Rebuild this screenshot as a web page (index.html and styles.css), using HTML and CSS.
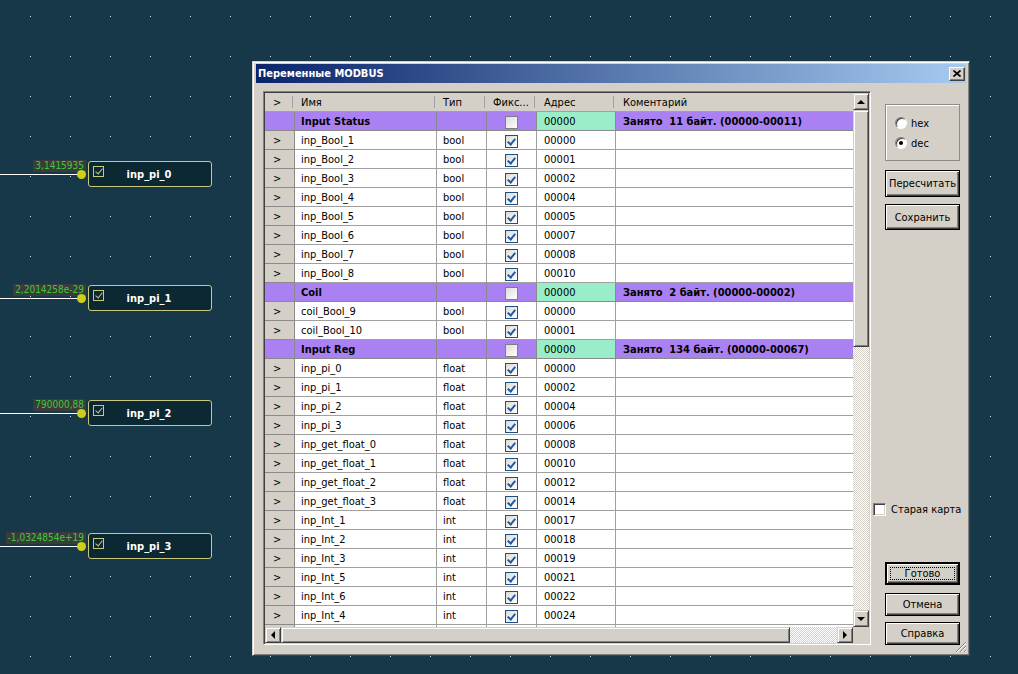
FILE: index.html
```html
<!DOCTYPE html>
<html>
<head>
<meta charset="utf-8">
<link rel="stylesheet" href="styles.css">
</head>
<body>
<div class="desktop">
  <div class="node n0"><div class="wire"><span class="val">3,1415935</span><span class="dot"></span></div><div class="blk"><i class="bck"></i><span class="bname">inp_pi_0</span></div></div>
  <div class="node n1"><div class="wire"><span class="val">2,2014258e-29</span><span class="dot"></span></div><div class="blk"><i class="bck"></i><span class="bname">inp_pi_1</span></div></div>
  <div class="node n2"><div class="wire"><span class="val">790000,88</span><span class="dot"></span></div><div class="blk"><i class="bck"></i><span class="bname">inp_pi_2</span></div></div>
  <div class="node n3"><div class="wire"><span class="val">-1,0324854e+19</span><span class="dot"></span></div><div class="blk"><i class="bck"></i><span class="bname">inp_pi_3</span></div></div>

  <div class="win">
    <div class="title">
      <span>Переменные MODBUS</span>
      <div class="xbtn"><svg width="8" height="7" viewBox="0 0 8 7"><path d="M0.5 0.5 L7.5 6.5 M7.5 0.5 L0.5 6.5" stroke="#000" stroke-width="1.7" fill="none"/></svg></div>
    </div>
    <div class="wbody">
      <div class="grid">
        <div class="gmain">
          <div class="table">
            <div class="row hdr"><div class="c rh">&gt;</div><div class="c">Имя</div><div class="c">Тип</div><div class="c">Фикс...</div><div class="c">Адрес</div><div class="c">Коментарий</div></div>

            <div class="row grp"><div class="c rh"></div><div class="c">Input Status</div><div class="c"></div><div class="c fx"><i class="cb"></i></div><div class="c ad">00000</div><div class="c">Занято&nbsp; 11 байт. (00000-00011)</div></div>
            <div class="row"><div class="c rh">&gt;</div><div class="c">inp_Bool_1</div><div class="c">bool</div><div class="c fx"><i class="cb on"></i></div><div class="c">00000</div><div class="c"></div></div>
            <div class="row"><div class="c rh">&gt;</div><div class="c">inp_Bool_2</div><div class="c">bool</div><div class="c fx"><i class="cb on"></i></div><div class="c">00001</div><div class="c"></div></div>
            <div class="row"><div class="c rh">&gt;</div><div class="c">inp_Bool_3</div><div class="c">bool</div><div class="c fx"><i class="cb on"></i></div><div class="c">00002</div><div class="c"></div></div>
            <div class="row"><div class="c rh">&gt;</div><div class="c">inp_Bool_4</div><div class="c">bool</div><div class="c fx"><i class="cb on"></i></div><div class="c">00004</div><div class="c"></div></div>
            <div class="row"><div class="c rh">&gt;</div><div class="c">inp_Bool_5</div><div class="c">bool</div><div class="c fx"><i class="cb on"></i></div><div class="c">00005</div><div class="c"></div></div>
            <div class="row"><div class="c rh">&gt;</div><div class="c">inp_Bool_6</div><div class="c">bool</div><div class="c fx"><i class="cb on"></i></div><div class="c">00007</div><div class="c"></div></div>
            <div class="row"><div class="c rh">&gt;</div><div class="c">inp_Bool_7</div><div class="c">bool</div><div class="c fx"><i class="cb on"></i></div><div class="c">00008</div><div class="c"></div></div>
            <div class="row"><div class="c rh">&gt;</div><div class="c">inp_Bool_8</div><div class="c">bool</div><div class="c fx"><i class="cb on"></i></div><div class="c">00010</div><div class="c"></div></div>

            <div class="row grp"><div class="c rh"></div><div class="c">Coil</div><div class="c"></div><div class="c fx"><i class="cb"></i></div><div class="c ad">00000</div><div class="c">Занято&nbsp; 2 байт. (00000-00002)</div></div>
            <div class="row"><div class="c rh">&gt;</div><div class="c">coil_Bool_9</div><div class="c">bool</div><div class="c fx"><i class="cb on"></i></div><div class="c">00000</div><div class="c"></div></div>
            <div class="row"><div class="c rh">&gt;</div><div class="c">coil_Bool_10</div><div class="c">bool</div><div class="c fx"><i class="cb on"></i></div><div class="c">00001</div><div class="c"></div></div>

            <div class="row grp"><div class="c rh"></div><div class="c">Input Reg</div><div class="c"></div><div class="c fx"><i class="cb"></i></div><div class="c ad">00000</div><div class="c">Занято&nbsp; 134 байт. (00000-00067)</div></div>
            <div class="row"><div class="c rh">&gt;</div><div class="c">inp_pi_0</div><div class="c">float</div><div class="c fx"><i class="cb on"></i></div><div class="c">00000</div><div class="c"></div></div>
            <div class="row"><div class="c rh">&gt;</div><div class="c">inp_pi_1</div><div class="c">float</div><div class="c fx"><i class="cb on"></i></div><div class="c">00002</div><div class="c"></div></div>
            <div class="row"><div class="c rh">&gt;</div><div class="c">inp_pi_2</div><div class="c">float</div><div class="c fx"><i class="cb on"></i></div><div class="c">00004</div><div class="c"></div></div>
            <div class="row"><div class="c rh">&gt;</div><div class="c">inp_pi_3</div><div class="c">float</div><div class="c fx"><i class="cb on"></i></div><div class="c">00006</div><div class="c"></div></div>
            <div class="row"><div class="c rh">&gt;</div><div class="c">inp_get_float_0</div><div class="c">float</div><div class="c fx"><i class="cb on"></i></div><div class="c">00008</div><div class="c"></div></div>
            <div class="row"><div class="c rh">&gt;</div><div class="c">inp_get_float_1</div><div class="c">float</div><div class="c fx"><i class="cb on"></i></div><div class="c">00010</div><div class="c"></div></div>
            <div class="row"><div class="c rh">&gt;</div><div class="c">inp_get_float_2</div><div class="c">float</div><div class="c fx"><i class="cb on"></i></div><div class="c">00012</div><div class="c"></div></div>
            <div class="row"><div class="c rh">&gt;</div><div class="c">inp_get_float_3</div><div class="c">float</div><div class="c fx"><i class="cb on"></i></div><div class="c">00014</div><div class="c"></div></div>
            <div class="row"><div class="c rh">&gt;</div><div class="c">inp_Int_1</div><div class="c">int</div><div class="c fx"><i class="cb on"></i></div><div class="c">00017</div><div class="c"></div></div>
            <div class="row"><div class="c rh">&gt;</div><div class="c">inp_Int_2</div><div class="c">int</div><div class="c fx"><i class="cb on"></i></div><div class="c">00018</div><div class="c"></div></div>
            <div class="row"><div class="c rh">&gt;</div><div class="c">inp_Int_3</div><div class="c">int</div><div class="c fx"><i class="cb on"></i></div><div class="c">00019</div><div class="c"></div></div>
            <div class="row"><div class="c rh">&gt;</div><div class="c">inp_Int_5</div><div class="c">int</div><div class="c fx"><i class="cb on"></i></div><div class="c">00021</div><div class="c"></div></div>
            <div class="row"><div class="c rh">&gt;</div><div class="c">inp_Int_6</div><div class="c">int</div><div class="c fx"><i class="cb on"></i></div><div class="c">00022</div><div class="c"></div></div>
            <div class="row"><div class="c rh">&gt;</div><div class="c">inp_Int_4</div><div class="c">int</div><div class="c fx"><i class="cb on"></i></div><div class="c">00024</div><div class="c"></div></div>
            <div class="row"><div class="c rh"></div><div class="c"></div><div class="c"></div><div class="c fx"></div><div class="c"></div><div class="c"></div></div>
          </div>
          <div class="vs">
            <div class="sb vbtn"><i class="ar up"></i></div>
            <div class="sb vthumb"></div>
            <div class="track"></div>
            <div class="sb vbtn"><i class="ar dn"></i></div>
          </div>
        </div>
        <div class="hs">
          <div class="sb hbtn"><i class="ar lf"></i></div>
          <div class="sb hthumb"></div>
          <div class="track"></div>
          <div class="sb hbtn"><i class="ar rt"></i></div>
          <div class="corner"></div>
        </div>
      </div>

      <div class="side">
        <div class="gbox">
          <label class="rad"><i class="rb"></i><span>hex</span></label>
          <label class="rad"><i class="rb sel"></i><span>dec</span></label>
        </div>
        <div class="btn b1">Пересчитать</div>
        <div class="btn b2">Сохранить</div>
        <label class="chk"><i class="cbx"></i><span>Старая карта</span></label>
        <div class="btn def"><span class="focus">Готово</span></div>
        <div class="btn b4">Отмена</div>
        <div class="btn b5">Справка</div>
      </div>
    </div>
    <svg class="grip" width="12" height="12" viewBox="0 0 12 12">
      <path d="M11 1 L1 11 M11 5 L5 11 M11 9 L9 11" stroke="#808080" stroke-width="1" fill="none"/>
      <path d="M11 2 L2 11 M11 6 L6 11 M11 10 L10 11" stroke="#fff" stroke-width="1" fill="none"/>
    </svg>
  </div>
</div>
</body>
</html>
```

FILE: styles.css
```css
* { box-sizing: border-box; }

html, body {
  margin: 0;
  padding: 0;
}

body {
  width: 1018px;
  height: 674px;
  overflow: hidden;
  background-color: #163848;
  background-image: radial-gradient(circle at 30.5px 16.5px, rgba(255,255,255,0.85) 0, rgba(255,255,255,0.85) 0.6px, rgba(255,255,255,0) 1px);
  background-size: 40px 40px;
  font-family: "DejaVu Sans Condensed", "DejaVu Sans", sans-serif;
  font-size: 11px;
  color: #000;
}

.desktop {
  position: relative;
  width: 1018px;
  height: 674px;
}

/* ---------- canvas nodes ---------- */
.node {
  position: absolute;
  left: 0;
  width: 212px;
  height: 26px;
  display: flex;
  align-items: center;
}
.n0 { top: 161px; }
.n1 { top: 285px; }
.n2 { top: 400px; }
.n3 { top: 533px; }

.wire {
  position: relative;
  width: 82px;
  height: 1px;
  background: #ffffff;
  flex: 0 0 82px;
}
.val {
  position: absolute;
  right: -4px;
  bottom: 3px;
  height: 12px;
  padding: 0 2px;
  background: #3a3c3c;
  color: #3ec83a;
  font-family: "DejaVu Sans Condensed", "DejaVu Sans", sans-serif;
  font-size: 10px;
  line-height: 12px;
  white-space: nowrap;
}
.dot {
  position: absolute;
  right: -4px;
  top: -4px;
  width: 9px;
  height: 9px;
  border-radius: 50%;
  background: #cfcf1a;
}
.blk {
  margin-left: 6px;
  width: 124px;
  height: 26px;
  border: 1px solid #c9c97e;
  border-radius: 3px;
  background: #0c2832;
  display: flex;
  align-items: center;
  padding: 0 17px 0 4px;
  color: #fff;
  font-weight: bold;
}
.bck {
  position: relative;
  width: 11px;
  height: 11px;
  margin-top: -5px;
  border: 1px solid #c9c97e;
  flex: 0 0 11px;
}
.bck::after {
  content: "";
  position: absolute;
  left: 3px;
  top: 0px;
  width: 3px;
  height: 6px;
  border-right: 1px solid #c9c97e;
  border-bottom: 1px solid #c9c97e;
  transform: rotate(40deg);
}
.bname {
  flex: 1;
  text-align: center;
}

/* ---------- window ---------- */
.win {
  position: absolute;
  left: 252px;
  top: 61px;
  width: 718px;
  height: 595px;
  background: #d4d0c8;
  border: 1px solid;
  border-color: #d4d0c8 #404040 #404040 #d4d0c8;
  box-shadow: inset 1px 1px #ffffff, inset -1px -1px #808080;
  padding: 2px 3px 3px 3px;
  display: flex;
  flex-direction: column;
}
.title {
  height: 19px;
  flex: 0 0 19px;
  display: flex;
  align-items: center;
  justify-content: space-between;
  padding: 0 1px 0 2px;
  background: linear-gradient(90deg, #0a246a 0%, #a6caf0 100%);
  color: #fff;
  font-weight: bold;
}
.xbtn {
  width: 16px;
  height: 14px;
  background: #d4d0c8;
  border: 1px solid;
  border-color: #fff #404040 #404040 #fff;
  box-shadow: inset -1px -1px #808080;
  display: flex;
  align-items: center;
  justify-content: center;
  padding-bottom: 1px;
}
.xbtn svg { display: block; }

.wbody {
  flex: 1;
  display: flex;
}

.grid {
  margin: 8px 0 0 7px;
  width: 608px;
  height: 554px;
  border: 1px solid;
  border-color: #808080 #ffffff #ffffff #808080;
  box-shadow: inset 1px 1px #404040, inset -1px -1px #d4d0c8;
  padding: 1px;
  display: flex;
  flex-direction: column;
  background: #d4d0c8;
}
.gmain {
  display: flex;
  height: 534px;
  flex: 0 0 534px;
}
.table {
  width: 588px;
  overflow: hidden;
  background: #fff;
}
.row {
  display: grid;
  grid-template-columns: 30px 142px 50px 50px 79px 237px;
  height: 19px;
  background: #fff;
}
.c {
  border-right: 1px solid #a0a0a0;
  border-bottom: 1px solid #a0a0a0;
  padding-left: 6px;
  line-height: 20px;
  white-space: nowrap;
  overflow: hidden;
}
.c:nth-child(5), .c:nth-child(6) { padding-left: 7px; }
.c:last-child { border-right: none; }
.rh {
  background: #d4d0c8;
  padding-left: 8px;
  border-color: #8a8a8a;
}
.fx {
  display: flex;
  align-items: center;
  justify-content: center;
  padding-left: 0;
  padding-top: 2px;
}

.hdr {
  background: #d4d0c8;
}
.hdr .c {
  position: relative;
  border-right: none;
  border-bottom: 1px solid #a0a0a0;
}
.hdr .c::after {
  content: "";
  position: absolute;
  right: -1px;
  top: 3px;
  bottom: 3px;
  width: 2px;
  border-left: 1px solid #a0a0a0;
  border-right: 1px solid #ffffff;
}
.hdr .c:last-child::after { display: none; }
.hdr .rh { padding-left: 8px; }

.grp, .grp .rh {
  background: #a981f2;
  font-weight: bold;
}
.grp .c { border-color: #8a8a8a; }
.grp .ad {
  background: #99eec9;
  font-weight: normal;
}
.grp .c:nth-child(4) { font-weight: normal; }

.cb {
  position: relative;
  width: 13px;
  height: 13px;
  border: 1px solid #7f7f7f;
  background: linear-gradient(135deg, #dcdcd6 0%, #ffffff 100%);
}
.cb.on {
  border-color: #1c5180;
}
.cb.on::after {
  content: "";
  position: absolute;
  left: 3px;
  top: 1px;
  width: 3px;
  height: 6px;
  border-right: 2px solid #2158a8;
  border-bottom: 2px solid #2158a8;
  transform: rotate(40deg);
}

/* ---------- scrollbars ---------- */
.sb {
  background: #d4d0c8;
  border: 1px solid;
  border-color: #d4d0c8 #404040 #404040 #d4d0c8;
  box-shadow: inset 1px 1px #ffffff, inset -1px -1px #808080;
  display: flex;
  align-items: center;
  justify-content: center;
}
.track {
  flex: 1;
  background: repeating-conic-gradient(#ffffff 0 25%, #d4d0c8 0 50%) 0 0 / 2px 2px;
}
.vs {
  width: 16px;
  display: flex;
  flex-direction: column;
}
.vbtn { height: 17px; flex: 0 0 17px; }
.vthumb { height: 237px; flex: 0 0 237px; }
.hs {
  height: 16px;
  flex: 0 0 16px;
  display: flex;
}
.hbtn { width: 16px; flex: 0 0 16px; }
.hthumb { width: 509px; flex: 0 0 509px; }
.corner { width: 16px; flex: 0 0 16px; background: #d4d0c8; }

.ar { width: 0; height: 0; display: block; }
.ar.up { border-left: 4px solid transparent; border-right: 4px solid transparent; border-bottom: 4px solid #000; }
.ar.dn { border-left: 4px solid transparent; border-right: 4px solid transparent; border-top: 4px solid #000; }
.ar.lf { border-top: 4px solid transparent; border-bottom: 4px solid transparent; border-right: 4px solid #000; }
.ar.rt { border-top: 4px solid transparent; border-bottom: 4px solid transparent; border-left: 4px solid #000; }

/* ---------- side panel ---------- */
.side {
  flex: 1;
  display: flex;
  flex-direction: column;
  padding-bottom: 7px;
}
.gbox {
  margin: 21px 0 0 14px;
  width: 75px;
  height: 57px;
  border: 1px solid #8c8c8c;
  box-shadow: inset 1px 1px #ffffff;
  padding: 8px 0 0 9px;
}
.rad {
  display: flex;
  align-items: center;
  height: 20px;
  gap: 4px;
}
.rb {
  position: relative;
  width: 12px;
  height: 12px;
  border-radius: 50%;
  background: #fff;
  border: 1px solid;
  border-color: #808080 #ffffff #ffffff #808080;
  box-shadow: inset 1px 1px #404040;
}
.rb.sel::after {
  content: "";
  position: absolute;
  left: 3px;
  top: 3px;
  width: 4px;
  height: 4px;
  border-radius: 50%;
  background: #000;
}

.btn {
  margin-left: 14px;
  width: 75px;
  height: 23px;
  border: 1px solid #000;
  background: #d4d0c8;
  box-shadow: inset 1px 1px #ffffff, inset -1px -1px #404040, inset -2px -2px #808080;
  display: flex;
  align-items: center;
  justify-content: center;
}
.b1 { margin-top: 9px; height: 27px; }
.b2 { margin-top: 7px; height: 26px; }
.def {
  margin-top: 46px;
  border: 2px solid #000;
  padding: 3px;
}
.focus {
  flex: 1;
  align-self: stretch;
  border: 1px dotted #000;
  display: flex;
  align-items: center;
  justify-content: center;
}
.b4 { margin-top: 8px; }
.b5 { margin-top: 6px; }

.chk {
  margin: auto 0 0 2px;
  display: flex;
  align-items: center;
  gap: 5px;
  height: 13px;
}
.cbx {
  width: 13px;
  height: 13px;
  background: #fff;
  border: 1px solid;
  border-color: #808080 #ffffff #ffffff #808080;
  box-shadow: inset 1px 1px #404040, inset -1px -1px #d4d0c8;
}

.grip {
  position: absolute;
  right: 2px;
  bottom: 2px;
  display: block;
}
```
